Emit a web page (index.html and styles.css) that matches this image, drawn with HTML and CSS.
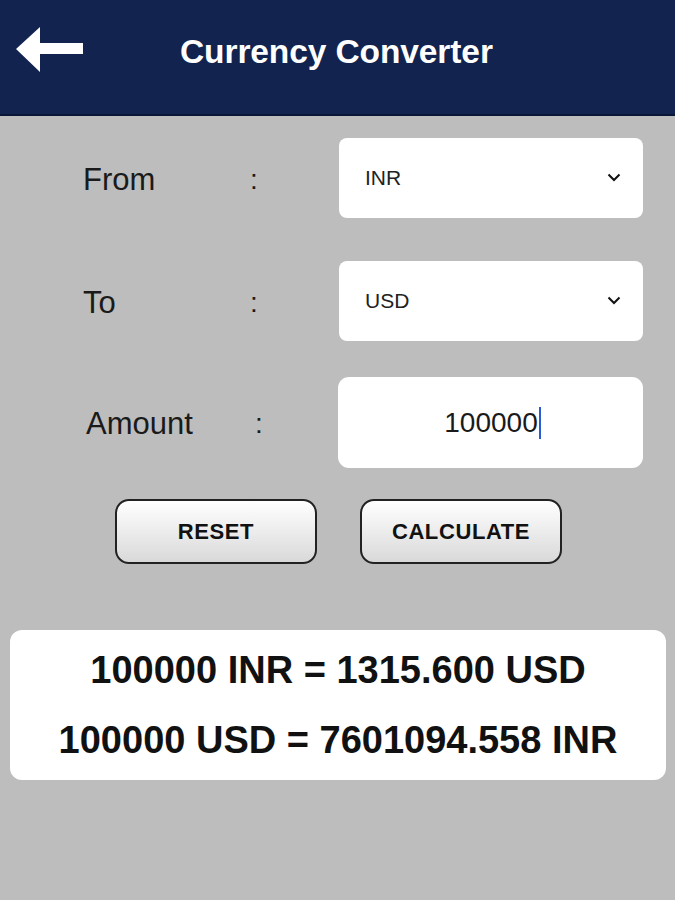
FILE: index.html
```html
<!DOCTYPE html>
<html>
<head>
<meta charset="utf-8">
<title>Currency Converter</title>
<link rel="stylesheet" href="styles.css">
</head>
<body>
<div class="app">
  <header class="topbar">
    <svg class="back" width="70" height="46" viewBox="0 0 70 46">
      <polygon points="1,22 25,0 25,16 68,16 68,27 25,27 25,45" fill="#ffffff"/>
    </svg>
    <h1 class="title">Currency Converter</h1>
  </header>

  <main class="form">
    <div class="row">
      <span class="label">From</span>
      <span class="colon">:</span>
      <div class="field select">
        <span class="value">INR</span>
        <svg class="chev" width="14" height="9" viewBox="0 0 14 9"><polyline points="1.5,1.5 7,7 12.5,1.5" fill="none" stroke="#111" stroke-width="2"/></svg>
      </div>
    </div>
    <div class="row row-to">
      <span class="label">To</span>
      <span class="colon">:</span>
      <div class="field select">
        <span class="value">USD</span>
        <svg class="chev" width="14" height="9" viewBox="0 0 14 9"><polyline points="1.5,1.5 7,7 12.5,1.5" fill="none" stroke="#111" stroke-width="2"/></svg>
      </div>
    </div>
    <div class="row row-amount">
      <span class="label label-amount">Amount</span>
      <span class="colon colon-amount">:</span>
      <div class="field input">
        <span class="amount">100000</span><span class="caret"></span>
      </div>
    </div>

    <div class="buttons">
      <button class="btn">RESET</button>
      <button class="btn">CALCULATE</button>
    </div>
  </main>

  <section class="results">
    <p class="result">100000 INR = 1315.600 USD</p>
    <p class="result">100000 USD = 7601094.558 INR</p>
  </section>
</div>
</body>
</html>
```

FILE: styles.css
```css
* { box-sizing: border-box; }
html, body { margin: 0; padding: 0; }
body {
  width: 675px;
  height: 900px;
  background: #bdbdbd;
  font-family: "Liberation Sans", Arial, sans-serif;
  color: #111;
  overflow: hidden;
}
.app { width: 675px; }

.topbar {
  height: 116px;
  background: #12234f;
  border-bottom: 2px solid #0a1638;
  display: flex;
  align-items: flex-start;
  padding: 27px 0 0 15px;
}
.back { display: block; flex: none; }
.title {
  margin: 2px 0 0 95px;
  font-size: 33.5px;
  font-weight: bold;
  color: #ffffff;
  line-height: 46px;
  letter-spacing: -0.1px;
}

.form {
  padding: 22px 0 0 83px;
}
.row {
  display: grid;
  grid-template-columns: 167px 89px 304px;
  align-items: center;
  height: 80px;
}
.row-to { margin-top: 43px; }
.row-amount { margin-top: 36px; height: 91px; }
.label {
  font-size: 31px;
  color: #1a1a1a;
  padding-top: 3px;
}
.label-amount { padding-left: 3px; }
.colon {
  font-size: 28px;
  color: #1a1a1a;
  padding-top: 3px;
}
.colon-amount { padding-left: 5px; }

.field {
  background: #ffffff;
  height: 100%;
  border-radius: 8px;
  display: flex;
  align-items: center;
}
.select {
  padding: 0 22px 0 26px;
  justify-content: space-between;
}
.value {
  font-size: 21px;
  color: #222;
}
.chev { display: block; margin-top: -2px; }
.input {
  border-radius: 11px;
  justify-content: center;
  padding-left: 4px;
  margin-left: -1px;
}
.amount {
  font-size: 28px;
  color: #1a1a1a;
}
.caret {
  display: inline-block;
  width: 2px;
  height: 32px;
  background: #2a5bd7;
  margin-left: 1px;
}

.buttons {
  display: flex;
  gap: 43px;
  margin-top: 31px;
  padding-left: 32px;
}
.btn {
  width: 202px;
  height: 65px;
  border: 2px solid #222;
  border-radius: 14px;
  background: linear-gradient(#ffffff, #d9d9d9);
  font-family: "Liberation Sans", Arial, sans-serif;
  font-weight: bold;
  font-size: 22px;
  letter-spacing: 0.6px;
  color: #111;
  padding: 0;
}

.results {
  margin: 66px 9px 0 10px;
  background: #ffffff;
  border-radius: 12px;
  padding: 5px 0;
  height: 150px;
}
.result {
  margin: 0;
  text-align: center;
  font-size: 38px;
  font-weight: bold;
  line-height: 70px;
  color: #111;
}
```
